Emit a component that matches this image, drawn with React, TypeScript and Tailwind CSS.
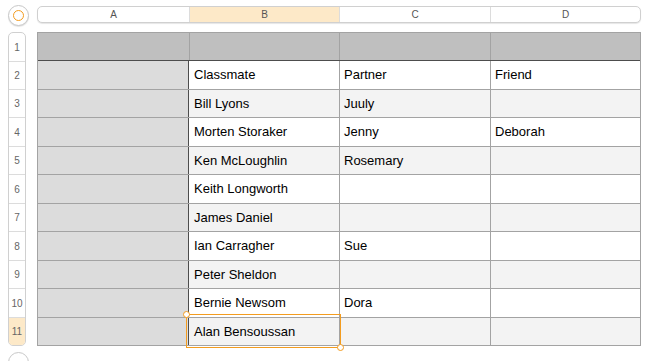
import React from 'react'

const cols = ['A', 'B', 'C', 'D']
const widths = ['w-[151px]', 'w-[150px]', 'w-[151px]', 'w-[150px]']

const rows: string[][] = [
  ['Classmate', 'Partner', 'Friend'],
  ['Bill Lyons', 'Juuly', ''],
  ['Morten Storaker', 'Jenny', 'Deborah'],
  ['Ken McLoughlin', 'Rosemary', ''],
  ['Keith Longworth', '', ''],
  ['James Daniel', '', ''],
  ['Ian Carragher', 'Sue', ''],
  ['Peter Sheldon', '', ''],
  ['Bernie Newsom', 'Dora', ''],
  ['Alan Bensoussan', '', ''],
]

// heights include the top border of each row
const dataHeights = ['h-[28px]', 'h-[28px]', 'h-[29px]', 'h-[28px]', 'h-[29px]', 'h-[28px]', 'h-[29px]', 'h-[28px]', 'h-[29px]', 'h-[28px]']
const headHeights = ['h-[28px]', 'h-[28px]', 'h-[28px]', 'h-[29px]', 'h-[28px]', 'h-[29px]', 'h-[28px]', 'h-[29px]', 'h-[28px]', 'h-[29px]', 'h-[28px]']

export default function App() {
  return (
    <div className="relative h-[361px] w-[650px] overflow-hidden bg-white font-['Liberation_Sans',Arial,sans-serif]">
      {/* top bar */}
      <div className="mt-[6px] flex h-[17px] items-start">
        <div className="ml-[8px] -mt-[1px] flex h-[21px] w-[21px] shrink-0 items-center justify-center rounded-full border border-[#c8c8c8] bg-white shadow-[0_1px_1px_rgba(0,0,0,0.12)]">
          <div className="h-[11px] w-[11px] rounded-full border-[1.5px] border-[#f39c1f]" />
        </div>
        <div className="ml-[8px] flex h-[17px] overflow-hidden rounded-[5px] border border-[#d0d0d0] bg-white shadow-[0_1px_1px_rgba(0,0,0,0.1)]">
          {cols.map((c, i) => (
            <div
              key={c}
              className={`${widths[i]} flex items-center justify-center text-[10px] text-[#555] ${i > 0 ? 'border-l border-[#dcdcdc]' : ''} ${c === 'B' ? 'bg-[#fde9c8]' : ''}`}
            >
              {c}
            </div>
          ))}
        </div>
      </div>

      {/* body */}
      <div className="mt-[9px] flex">
        <div className="ml-[8px] flex w-[18px] flex-col overflow-hidden rounded-[5px] border border-[#d0d0d0] bg-white">
          {headHeights.map((h, i) => (
            <div
              key={i}
              className={`${h} flex shrink-0 items-center justify-center text-[10px] text-[#666] ${i > 0 ? 'border-t border-[#dcdcdc]' : ''} ${i === 10 ? 'bg-[#fde9c8]' : ''}`}
            >
              {i + 1}
            </div>
          ))}
        </div>

        <div className="ml-[11px] flex flex-col border border-[#a3a3a3] text-[13px] text-black">
          {/* header row */}
          <div className="flex h-[28px] border-b border-[#4d4d4d] bg-[#bfbfbf]">
            {cols.map((c, i) => (
              <div key={c} className={`${widths[i]} ${i > 0 ? 'border-l border-[#a3a3a3]' : ''}`} />
            ))}
          </div>
          {rows.map((r, ri) => (
            <div
              key={ri}
              className={`flex ${dataHeights[ri]} ${ri > 0 ? 'border-t border-[#a3a3a3]' : ''} ${ri % 2 === 1 ? 'bg-[#f3f3f3]' : 'bg-white'}`}
            >
              <div className="w-[150px] bg-[#dcdcdc]" />
              <div className="w-[151px] border-l border-[#4d4d4d] pl-[5px] pt-[4px]">{r[0]}</div>
              {r.slice(1).map((v, ci) => (
                <div key={ci} className={`${widths[ci + 2]} border-l border-[#a3a3a3] pl-[4px] pt-[4px]`}>
                  {v}
                </div>
              ))}
            </div>
          ))}
        </div>
      </div>

      {/* selection */}
      <div className="absolute left-[186px] top-[314px] h-[34px] w-[155px] border border-[#f39c1f]" />
      <div className="absolute left-[183px] top-[311px] h-[7px] w-[7px] rounded-full border border-[#f39c1f] bg-white" />
      <div className="absolute left-[337px] top-[344px] h-[7px] w-[7px] rounded-full border border-[#f39c1f] bg-white" />

      {/* bottom circle */}
      <div className="absolute left-[8px] top-[352px] h-[21px] w-[21px] rounded-full border border-[#c8c8c8] bg-white" />
    </div>
  )
}
